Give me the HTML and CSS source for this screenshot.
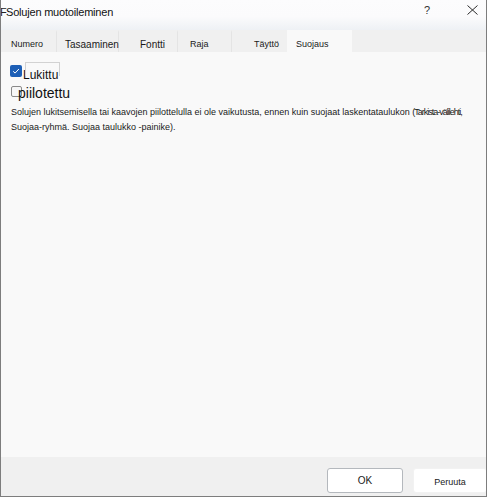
FILE: index.html
```html
<!DOCTYPE html>
<html lang="fi">
<head>
<meta charset="utf-8">
<title>Solujen muotoileminen</title>
<link rel="stylesheet" href="styles.css">
</head>
<body>
<div class="window">
  <div class="titlebar">
    <span class="app-f">F</span>
    <span class="title">Solujen muotoileminen</span>
    <span class="help">?</span>
    <span class="close">
      <svg width="11" height="10" viewBox="0 0 11 10"><path d="M0.5 0.5 L10.5 9.5 M10.5 0.5 L0.5 9.5" stroke="#2b2b2b" stroke-width="1" fill="none"/></svg>
    </span>
  </div>
  <div class="tabs">
    <div class="tab tab-numero">Numero</div>
    <div class="tab tab-tasaus">Tasaaminen</div>
    <div class="tab tab-fontti">Fontti</div>
    <div class="tab tab-raja">Raja</div>
    <div class="tab tab-taytto">Täyttö</div>
    <div class="tab tab-suojaus active">Suojaus</div>
  </div>
  <div class="content">
    <div class="check-row row-locked">
      <span class="box checked">
        <svg width="12" height="12" viewBox="0 0 12 12"><path d="M3.2 6.3 L5.1 8.1 L8.9 4.0" stroke="#ffffff" stroke-width="1" fill="none"/></svg>
      </span>
      <span class="label label-locked">Lukittu</span>
    </div>
    <div class="check-row row-hidden">
      <span class="box unchecked"></span>
      <span class="label label-hidden">piilotettu</span>
    </div>
    <p class="desc">Solujen lukitsemisella tai kaavojen piilottelulla ei ole vaikutusta, ennen kuin suojaat laskentataulukon <span class="squeezed">(Tarkista-välilehti,</span><br>Suojaa-ryhmä. Suojaa taulukko -painike).</p>
  </div>
  <div class="footer">
    <button class="btn btn-ok">OK</button>
    <button class="btn btn-cancel">Peruuta</button>
  </div>
</div>
</body>
</html>
```
FILE: styles.css
```css
html, body {
  margin: 0;
  padding: 0;
  background: #ffffff;
}
body {
  width: 490px;
  height: 499px;
  overflow: hidden;
  font-family: "Liberation Sans", Arial, sans-serif;
  color: #1a1a1a;
}
.window {
  width: 485px;
  height: 496px;
  border-left: 1px solid #7d7d7d;
  border-right: 1px solid #7d7d7d;
  border-bottom: 1px solid #7d7d7d;
  display: flex;
  flex-direction: column;
  overflow: hidden;
  background: #f9f9f9;
}
.titlebar {
  height: 30px;
  flex: none;
  display: flex;
  align-items: flex-start;
  background: linear-gradient(to bottom, #fcfcfd 0%, #fbfbfc 55%, #eef1f5 100%);
  margin-left: -1px;
}
.app-f {
  font-size: 11px;
  line-height: 14px;
  margin-top: 5px;
  width: 6px;
  color: #222;
}
.title {
  font-size: 11px;
  letter-spacing: -0.2px;
  line-height: 14px;
  margin-top: 5px;
  color: #111;
  flex: 1;
}
.help {
  font-size: 11px;
  line-height: 14px;
  margin-top: 3px;
  color: #333;
  width: 43px;
}
.close {
  margin-top: 5px;
  width: 19px;
  display: flex;
}
.tabs {
  height: 22px;
  flex: none;
  display: flex;
  background: #f0f0f0;
}
.tab {
  box-sizing: border-box;
  height: 22px;
  display: flex;
  align-items: center;
  padding-top: 3px;
  font-size: 9px;
  color: #1a1a1a;
  border-right: 1px solid #e4e4e4;
  border-top: 2px solid transparent;
  white-space: nowrap;
}
.tab-numero { width: 56px; padding-left: 10px; }
.tab-tasaus { width: 62px; padding-left: 8px; font-size: 10px; padding-top: 4px; }
.tab-fontti { width: 59px; padding-left: 21px; font-size: 10px; padding-top: 4px; }
.tab-raja { width: 54px; padding-left: 12px; }
.tab-taytto { width: 55px; padding-left: 22px; border-right: none; }
.tab-suojaus { width: 65px; padding-left: 9px; border-right: none; }
.tab.active {
  background: #f9f9f9;
}
.content {
  flex: 1;
  background: #f9f9f9;
  padding: 14px 0 0 9px;
}
.check-row {
  display: flex;
  align-items: flex-start;
}
.row-locked {
  height: 16px;
}
.row-hidden {
  height: 18px;
  margin-top: 2px;
}
.box {
  box-sizing: border-box;
  flex: none;
  display: flex;
  border-radius: 2px;
}
.box.checked {
  width: 12px;
  height: 12px;
  margin-top: -1px;
  background: #1d5fb6;
}
.box.unchecked {
  width: 11px;
  height: 11px;
  margin-top: 2px;
  margin-left: 1px;
  border: 1px solid #8a8a8a;
  background: #f7f7f7;
}
.label {
  color: #111;
}
.label-locked {
  position: relative;
  font-size: 12px;
  line-height: 16px;
  margin-left: 1px;
  top: 1px;
}
.label-locked::after {
  content: "";
  position: absolute;
  left: 2px;
  top: -5px;
  width: 33px;
  height: 13px;
  border: 1px solid #d2d2d2;
  border-bottom: none;
}
.label-hidden {
  font-size: 14px;
  line-height: 18px;
  margin-left: -4px;
}
.desc {
  margin: 3px 0 0 1px;
  font-size: 9px;
  line-height: 15px;
  color: #1a1a1a;
}
.squeezed {
  letter-spacing: -1px;
}
.footer {
  height: 39px;
  flex: none;
  background: #f0f0f0;
  display: flex;
  align-items: flex-start;
  padding-top: 11px;
  box-sizing: border-box;
  padding-left: 326px;
}
.btn {
  font-family: "Liberation Sans", Arial, sans-serif;
  height: 25px;
  background: #ffffff;
  color: #1a1a1a;
  border-radius: 3px;
  padding: 0;
  flex: none;
}
.btn-ok {
  width: 76px;
  font-size: 10px;
  border: 1px solid #b4b8bd;
}
.btn-cancel {
  width: 74px;
  margin-left: 10px;
  font-size: 9px;
  padding-top: 3px;
  border: 1px solid #f2f2f2;
}
```
